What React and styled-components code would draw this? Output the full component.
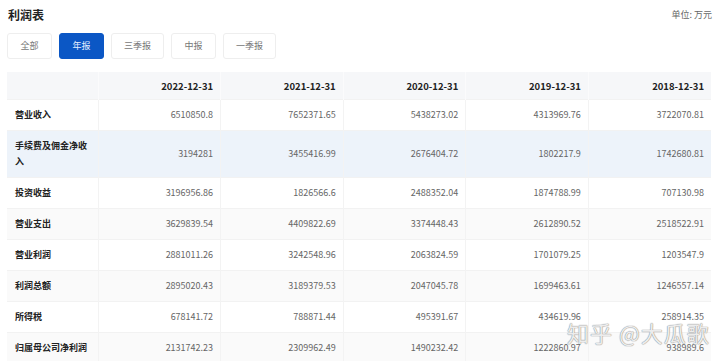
import React from "react";
import styled, { createGlobalStyle } from "styled-components";

const GlobalStyle = createGlobalStyle`
  html, body { margin: 0; padding: 0; background: #ffffff; }
  body {
    font-family: "Noto Sans CJK SC", "Noto Sans", sans-serif;
    color: #333;
    overflow: hidden;
  }
`;

const Page = styled.div`
  position: relative;
  width: 720px;
  height: 361px;
  overflow: hidden;
  padding: 0 9px 0 7px;
  box-sizing: border-box;
`;

const Header = styled.div`
  display: flex;
  justify-content: space-between;
  align-items: flex-start;
  padding: 6px 0 0 1px;
  height: 27px;
  box-sizing: border-box;
`;

const Title = styled.h1`
  margin: 0;
  font-size: 12px;
  line-height: 17px;
  font-weight: 700;
  color: #222;
`;

const Unit = styled.span`
  font-size: 9px;
  line-height: 14px;
  color: #666;
  margin-top: 2px;
  margin-right: -1px;
`;

const Tabs = styled.div`
  display: flex;
  gap: 7px;
  margin: 6px 0 0 0;
`;

const Tab = styled.button`
  height: 26px;
  padding: 0 12px;
  min-width: 45px;
  box-sizing: border-box;
  border: 1px solid ${(p) => (p.$active ? "#0b57c5" : "#eeeeee")};
  border-radius: 3px;
  background: ${(p) => (p.$active ? "#0b57c5" : "#ffffff")};
  color: ${(p) => (p.$active ? "#e6efff" : "#777")};
  font-family: inherit;
  font-size: 9px;
  line-height: 24px;
  cursor: pointer;
`;

const Table = styled.table`
  margin-top: 13px;
  width: 704px;
  border-collapse: collapse;
  table-layout: fixed;
  font-size: 9px;
`;

const Th = styled.th`
  height: 27px;
  padding: 0 7px;
  background: #f6f7f9;
  text-align: right;
  font-weight: 700;
  font-size: 9.5px;
  color: #222;
  border-right: 1px solid #fbfbfc;
  &:first-child { text-align: left; }
  &:last-child { border-right: none; }
`;

const Row = styled.tr`
  background: ${(p) => (p.$hover ? "#edf3fa" : p.$striped ? "#fafafa" : "#ffffff")};
  border-top: 1px solid #f2f2f2;
`;

const Label = styled.td`
  padding: 7px 8px 7px 8px;
  height: 16px;
  line-height: 16px;
  font-weight: 700;
  color: #222;
  text-align: left;
  border-right: 1px solid #f3f3f3;
  word-break: break-all;
`;

const Cell = styled.td`
  padding: 7px 7px;
  line-height: 16px;
  color: #666;
  text-align: right;
  border-right: 1px solid #f3f3f3;
  &:last-child { border-right: none; }
`;

const Watermark = styled.div`
  position: absolute;
  left: 567px;
  top: 318px;
  font-size: 22px;
  line-height: 28px;
  letter-spacing: 1px;
  color: rgba(255, 255, 255, 0.85);
  text-shadow: 0 0 1px #8a8a8a, 0 0 1px #8a8a8a;
  pointer-events: none;
  white-space: nowrap;
`;

const dates = ["2022-12-31", "2021-12-31", "2020-12-31", "2019-12-31", "2018-12-31"];

const rows = [
  ["营业收入", ["6510850.8", "7652371.65", "5438273.02", "4313969.76", "3722070.81"]],
  ["手续费及佣金净收入", ["3194281", "3455416.99", "2676404.72", "1802217.9", "1742680.81"]],
  ["投资收益", ["3196956.86", "1826566.6", "2488352.04", "1874788.99", "707130.98"]],
  ["营业支出", ["3629839.54", "4409822.69", "3374448.43", "2612890.52", "2518522.91"]],
  ["营业利润", ["2881011.26", "3242548.96", "2063824.59", "1701079.25", "1203547.9"]],
  ["利润总额", ["2895020.43", "3189379.53", "2047045.78", "1699463.61", "1246557.14"]],
  ["所得税", ["678141.72", "788871.44", "495391.67", "434619.96", "258914.35"]],
  ["归属母公司净利润", ["2131742.23", "2309962.49", "1490232.42", "1222860.97", "938989.6"]],
];

const tabs = [
  { label: "全部" },
  { label: "年报", active: true },
  { label: "三季报" },
  { label: "中报" },
  { label: "一季报" },
];

export default function App() {
  return (
    <>
      <GlobalStyle />
      <Page>
        <Header>
          <Title>利润表</Title>
          <Unit>单位: 万元</Unit>
        </Header>
        <Tabs>
          {tabs.map((t) => (
            <Tab key={t.label} $active={t.active}>
              {t.label}
            </Tab>
          ))}
        </Tabs>
        <Table>
          <colgroup>
            <col style={{ width: "91px" }} />
            {dates.map((d) => (
              <col key={d} />
            ))}
          </colgroup>
          <thead>
            <tr>
              <Th />
              {dates.map((d) => (
                <Th key={d}>{d}</Th>
              ))}
            </tr>
          </thead>
          <tbody>
            {rows.map(([label, vals], i) => (
              <Row key={label} $striped={i % 2 === 1} $hover={i === 1}>
                <Label>{label}</Label>
                {vals.map((v, j) => (
                  <Cell key={j}>{v}</Cell>
                ))}
              </Row>
            ))}
          </tbody>
        </Table>
        <Watermark>知乎 @大瓜歌</Watermark>
      </Page>
    </>
  );
}
